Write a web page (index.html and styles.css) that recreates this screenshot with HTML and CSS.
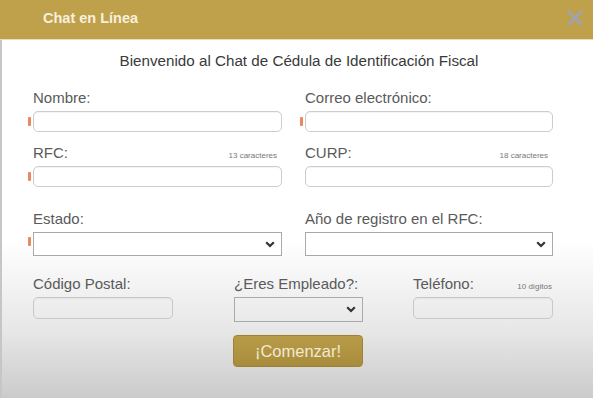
FILE: index.html
```html
<!DOCTYPE html>
<html lang="es">
<head>
<meta charset="utf-8">
<title>Chat en Línea</title>
<link rel="stylesheet" href="styles.css">
</head>
<body>
<div class="dialog">
  <header class="bar">
    <span class="title">Chat en Línea</span>
    <svg class="close" width="16" height="16" viewBox="0 0 16 16"><path d="M2 2 L14 14 M14 2 L2 14" stroke="#9da2b4" stroke-width="2.8" stroke-linecap="round"/></svg>
  </header>
  <main class="content">
    <p class="welcome">Bienvenido al Chat de Cédula de Identificación Fiscal</p>
    <div class="grid2">
      <div class="field">
        <div class="lab"><label>Nombre:</label></div>
        <div class="ctl"><span class="req"></span><input class="txt" type="text"></div>
      </div>
      <div class="field">
        <div class="lab"><label>Correo electrónico:</label></div>
        <div class="ctl"><span class="req"></span><input class="txt" type="text"></div>
      </div>
      <div class="field">
        <div class="lab"><label>RFC:</label><span class="hint">13 caracteres</span></div>
        <div class="ctl"><span class="req"></span><input class="txt" type="text"></div>
      </div>
      <div class="field">
        <div class="lab"><label>CURP:</label><span class="hint">18 caracteres</span></div>
        <div class="ctl"><input class="txt" type="text"></div>
      </div>
      <div class="field sep">
        <div class="lab"><label>Estado:</label></div>
        <div class="ctl"><span class="req req-s"></span><select class="sel"><option></option></select><svg class="chev" width="10" height="7" viewBox="0 0 10 7"><path d="M1.2 1.2 L5 5 L8.8 1.2" fill="none" stroke="#333" stroke-width="2.2"/></svg></div>
      </div>
      <div class="field sep">
        <div class="lab"><label>Año de registro en el RFC:</label></div>
        <div class="ctl"><select class="sel"><option></option></select><svg class="chev" width="10" height="7" viewBox="0 0 10 7"><path d="M1.2 1.2 L5 5 L8.8 1.2" fill="none" stroke="#333" stroke-width="2.2"/></svg></div>
      </div>
    </div>
    <div class="grid3">
      <div class="field w140">
        <div class="lab"><label>Código Postal:</label></div>
        <div class="ctl"><input class="txt clear" type="text"></div>
      </div>
      <div class="field w129">
        <div class="lab"><label>¿Eres Empleado?:</label></div>
        <div class="ctl"><select class="sel tall"><option></option></select><svg class="chev" width="10" height="7" viewBox="0 0 10 7"><path d="M1.2 1.2 L5 5 L8.8 1.2" fill="none" stroke="#333" stroke-width="2.2"/></svg></div>
      </div>
      <div class="field w140">
        <div class="lab"><label>Teléfono:</label><span class="hint hint-t">10 dígitos</span></div>
        <div class="ctl"><input class="txt clear" type="text"></div>
      </div>
      <div class="go"><button class="btn" type="button">¡Comenzar!</button></div>
    </div>
  </main>
</div>
</body>
</html>
```

FILE: styles.css
```css
html, body {
  margin: 0;
  padding: 0;
}
body {
  width: 593px;
  height: 398px;
  overflow: hidden;
  font-family: "Liberation Sans", Arial, sans-serif;
  background: linear-gradient(to bottom, #ffffff 0, #ffffff 240px, #e7e7e7 330px, #cbcbcb 398px);
}
.dialog {
  height: 398px;
  display: flex;
  flex-direction: column;
}
.bar {
  height: 39px;
  background: #c0a14b;
  border-bottom: 1px solid #e9deb9;
  display: flex;
  align-items: center;
  justify-content: space-between;
  padding: 0 10px 0 43px;
  flex-shrink: 0;
}
.title {
  color: #f7f0de;
  font-size: 14.5px;
  font-weight: bold;
  margin-top: -3px;
}
.close {
  margin-top: -4px;
}
.content {
  flex: 1;
  border-left: 2px solid #c6c6c6;
  padding: 13px 0 0 31px;
}
.welcome {
  margin: 0;
  font-size: 15.2px;
  line-height: 16px;
  color: #3a3a3a;
  text-align: center;
  width: 532px;
}
.grid2 {
  display: grid;
  grid-template-columns: 249px 248px;
  column-gap: 23px;
  row-gap: 13px;
  margin-top: 21px;
}
.grid2 .sep {
  margin-top: 11px;
}
.field {
  display: flex;
  flex-direction: column;
  gap: 5px;
}
.lab {
  display: flex;
  justify-content: space-between;
  align-items: baseline;
  height: 16px;
  line-height: 16px;
}
.lab label {
  font-size: 15px;
  color: #5a5a5a;
}
.hint {
  font-size: 8px;
  color: #777;
  margin-right: 5px;
}
.hint-t {
  margin-right: 1px;
}
.ctl {
  position: relative;
  display: flex;
}
.req {
  position: absolute;
  left: -5px;
  top: 6px;
  width: 3px;
  height: 9px;
  background: #e8885c;
  border-radius: 1px;
}
.req-s {
  top: 5px;
}
.txt {
  width: 100%;
  height: 21px;
  box-sizing: border-box;
  border: 1px solid #cdcdcd;
  border-radius: 5px;
  background: #fff;
  box-shadow: inset 0 1px 1px rgba(0,0,0,0.05);
  margin: 0;
  padding: 0 4px;
}
.txt.clear {
  background: transparent;
  height: 22px;
  border-color: #c8c8c8;
}
.sel {
  width: 100%;
  height: 24px;
  box-sizing: border-box;
  border: 1px solid #aaaaaa;
  border-radius: 0;
  background: #fff;
  -webkit-appearance: none;
  appearance: none;
  margin: 0;
}
.sel.tall {
  height: 25px;
  background: transparent;
}
.chev {
  position: absolute;
  right: 7px;
  top: 9px;
}
.grid3 {
  display: grid;
  grid-template-columns: 201px 179px 140px;
  margin-top: 20px;
}
.w140 {
  width: 140px;
}
.w129 {
  width: 129px;
}
.go {
  grid-column: 2;
  margin-top: 13px;
}
.btn {
  width: 130px;
  height: 32px;
  margin-left: -1px;
  border: 1px solid #9d8236;
  border-radius: 4px;
  background: linear-gradient(to bottom, #b99c48, #a88c3d);
  color: #f2e9d0;
  font-family: "Liberation Sans", Arial, sans-serif;
  font-size: 16.5px;
  padding: 0;
}
```
